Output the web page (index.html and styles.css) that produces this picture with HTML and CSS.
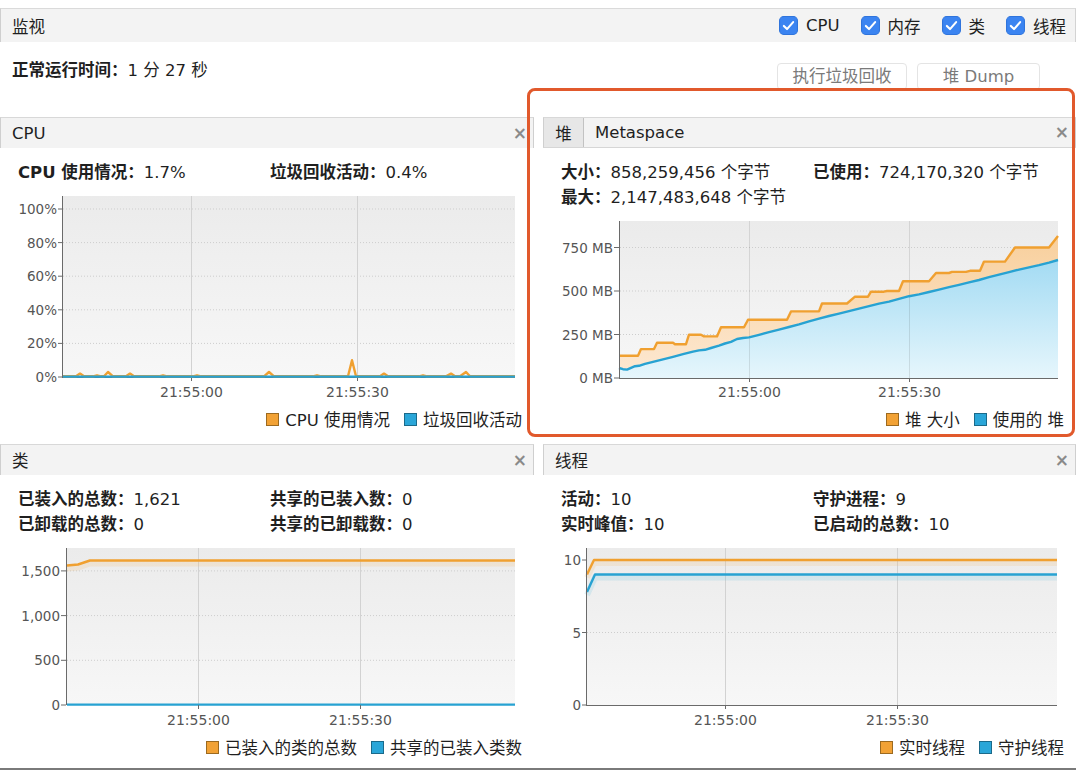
FILE: index.html
```html
<!DOCTYPE html>
<html lang="zh-CN">
<head>
<meta charset="utf-8">
<title>监视</title>
<link rel="stylesheet" href="styles.css">
</head>
<body>
<svg class="defs" width="0" height="0" aria-hidden="true">
  <defs>
    <linearGradient id="plotbg" x1="0" y1="0" x2="0" y2="1">
      <stop offset="0" stop-color="#ebebeb"/>
      <stop offset="1" stop-color="#f7f7f7"/>
    </linearGradient>
    <linearGradient id="heapOrange" x1="0" y1="0" x2="0" y2="1">
      <stop offset="0" stop-color="#f8cf9c"/>
      <stop offset="1" stop-color="#fde9d3"/>
    </linearGradient>
    <linearGradient id="heapBlue" x1="0" y1="0" x2="0" y2="1">
      <stop offset="0" stop-color="#a3dbf3"/>
      <stop offset="1" stop-color="#e6f6fc"/>
    </linearGradient>
  </defs>
</svg>
<div class="app">
  <div class="monitor-bar">
    <span class="bar-title">监视</span>
    <div class="toggles">
      <label class="toggle"><svg class="cb" viewBox="0 0 18 18"><rect x="0.5" y="0.5" width="17" height="17" rx="4" class="cb-box"/><path d="M4.6 9.4 L7.6 12.4 L13.4 5.8" class="cb-check"/></svg>CPU</label>
      <label class="toggle"><svg class="cb" viewBox="0 0 18 18"><rect x="0.5" y="0.5" width="17" height="17" rx="4" class="cb-box"/><path d="M4.6 9.4 L7.6 12.4 L13.4 5.8" class="cb-check"/></svg>内存</label>
      <label class="toggle"><svg class="cb" viewBox="0 0 18 18"><rect x="0.5" y="0.5" width="17" height="17" rx="4" class="cb-box"/><path d="M4.6 9.4 L7.6 12.4 L13.4 5.8" class="cb-check"/></svg>类</label>
      <label class="toggle"><svg class="cb" viewBox="0 0 18 18"><rect x="0.5" y="0.5" width="17" height="17" rx="4" class="cb-box"/><path d="M4.6 9.4 L7.6 12.4 L13.4 5.8" class="cb-check"/></svg>线程</label>
    </div>
  </div>

  <div class="info-row">
    <div class="uptime"><b>正常运行时间：</b>1 分 27 秒</div>
    <div class="actions">
      <button class="btn btn-gc">执行垃圾回收</button>
      <button class="btn btn-dump">堆 Dump</button>
    </div>
  </div>

  <div class="panels">
    <!-- CPU -->
    <section class="panel">
      <div class="panel-head"><span>CPU</span><span class="close">×</span></div>
      <div class="stats single">
        <div><b>CPU 使用情况：</b>1.7%</div>
        <div><b>垃圾回收活动：</b>0.4%</div>
      </div>
      <svg class="chart" width="534" height="206" viewBox="0 0 534 206">
        <rect x="62" y="0" width="453" height="181" fill="url(#plotbg)"/>
        <g class="hgrid">
          <line x1="63" y1="13" x2="515" y2="13"/>
          <line x1="63" y1="46.6" x2="515" y2="46.6"/>
          <line x1="63" y1="80.2" x2="515" y2="80.2"/>
          <line x1="63" y1="113.8" x2="515" y2="113.8"/>
          <line x1="63" y1="147.4" x2="515" y2="147.4"/>
        </g>
        <g class="vgrid">
          <line x1="191.5" y1="0" x2="191.5" y2="181"/>
          <line x1="357.5" y1="0" x2="357.5" y2="181"/>
        </g>
        <g class="axis">
          <line x1="62.5" y1="0" x2="62.5" y2="181"/>
          <line x1="62" y1="181.5" x2="515" y2="181.5"/>
          <line x1="58" y1="13" x2="62" y2="13"/>
          <line x1="58" y1="46.6" x2="62" y2="46.6"/>
          <line x1="58" y1="80.2" x2="62" y2="80.2"/>
          <line x1="58" y1="113.8" x2="62" y2="113.8"/>
          <line x1="58" y1="147.4" x2="62" y2="147.4"/>
          <line x1="58" y1="181" x2="62" y2="181"/>
          <line x1="191.5" y1="181" x2="191.5" y2="185"/>
          <line x1="357.5" y1="181" x2="357.5" y2="185"/>
        </g>
        <g class="ylab">
          <text x="57" y="18">100%</text>
          <text x="57" y="51.6">80%</text>
          <text x="57" y="85.2">60%</text>
          <text x="57" y="118.8">40%</text>
          <text x="57" y="152.4">20%</text>
          <text x="57" y="186">0%</text>
        </g>
        <g class="xlab">
          <text x="191.5" y="201">21:55:00</text>
          <text x="357.5" y="201">21:55:30</text>
        </g>
        <path class="ln-o" d="M63,180.3 L76,180.3 L80,177.6 L84,180.3 L93,180.3 L97,179.3 L101,180.3 L104,180.3 L108,176 L113,180.3 L126,180.3 L130,177.6 L134,180.3 L159,180.3 L163,179.3 L167,180.3 L193,180.3 L197,179.3 L201,180.3 L264,180.3 L269,176 L274,180.3 L313,180.3 L317,179.3 L321,180.3 L348,180.3 L352,164.2 L356,180.3 L380,180.3 L384,177.6 L388,180.3 L419,180.3 L423,179.3 L427,180.3 L446,180.3 L451,177.6 L455,180.3 L460,180.3 L466,176 L470,180.3 L515,180.3"/>
        <path class="ln-b" d="M63,180.6 L515,180.6"/>
      </svg>
      <div class="legend">
        <span class="legend-item"><span class="sw sw-o"></span>CPU 使用情况</span>
        <span class="legend-item"><span class="sw sw-b"></span>垃圾回收活动</span>
      </div>
    </section>

    <!-- Heap -->
    <section class="panel">
      <div class="panel-head tabs">
        <div class="tabbar">
          <span class="tab active">堆</span>
          <span class="tab">Metaspace</span>
        </div>
        <span class="close">×</span>
      </div>
      <div class="stats">
        <div><b>大小：</b>858,259,456 个字节</div>
        <div><b>已使用：</b>724,170,320 个字节</div>
        <div><b>最大：</b>2,147,483,648 个字节</div>
      </div>
      <svg class="chart" width="533" height="181" viewBox="0 0 533 181">
        <rect x="76" y="0" width="439" height="157" fill="url(#plotbg)"/>
        <g class="hgrid">
          <line x1="77" y1="26.5" x2="515" y2="26.5"/>
          <line x1="77" y1="70" x2="515" y2="70"/>
          <line x1="77" y1="113.5" x2="515" y2="113.5"/>
        </g>
        <g transform="translate(76,0)">
          <path fill="url(#heapOrange)" d="M0,134.7 L19,134.7 L22,128.1 L35,128.1 L38,121.7 L54,121.7 L56,123.2 L67,123.2 L70,113.7 L82,113.7 L85,115.4 L98,115.4 L102,106.2 L125,106.2 L129,98.7 L168,98.7 L172,90.4 L200,90.4 L203,82.5 L228,82.5 L236,75.7 L249,75.7 L252,70.7 L265,70.7 L268,70 L280,70 L284,60.3 L310,60.3 L317,52 L330,52 L333,50.9 L347,50.9 L351,49.8 L361,49.8 L365,40.6 L386,40.6 L396,26.5 L430,26.5 L439,15 L439,157 L0,157 Z"/>
          <path fill="url(#heapBlue)" d="M0,147 L4,148.2 L8,148.6 L12,146.8 L16,145.2 L20,144.8 L26,142.8 L34,140.8 L44,138.4 L54,135.8 L64,133.2 L74,130.6 L80,129.4 L86,128.8 L92,127 L100,124.6 L106,122.5 L112,120.8 L118,118 L124,117 L130,116.4 L140,113.8 L150,111.2 L160,108.6 L170,106 L180,103.4 L190,100.4 L200,97.6 L210,95 L220,92.6 L230,90.2 L240,87.6 L250,85.2 L260,82.6 L270,80.6 L280,77.8 L290,75.2 L300,73.4 L310,71 L320,68.6 L330,66.2 L340,63.8 L350,61.4 L360,59 L370,56.2 L380,53.6 L390,51.2 L400,48.6 L410,46.4 L420,44.2 L430,41.6 L439,39 L439,157 L0,157 Z"/>
        </g>
        <g class="vgrid soft">
          <line x1="206.5" y1="0" x2="206.5" y2="157"/>
          <line x1="366.5" y1="0" x2="366.5" y2="157"/>
        </g>
        <g transform="translate(76,0)">
          <path class="ln-o" d="M0,134.7 L19,134.7 L22,128.1 L35,128.1 L38,121.7 L54,121.7 L56,123.2 L67,123.2 L70,113.7 L82,113.7 L85,115.4 L98,115.4 L102,106.2 L125,106.2 L129,98.7 L168,98.7 L172,90.4 L200,90.4 L203,82.5 L228,82.5 L236,75.7 L249,75.7 L252,70.7 L265,70.7 L268,70 L280,70 L284,60.3 L310,60.3 L317,52 L330,52 L333,50.9 L347,50.9 L351,49.8 L361,49.8 L365,40.6 L386,40.6 L396,26.5 L430,26.5 L439,15"/>
          <path class="ln-b" d="M0,147 L4,148.2 L8,148.6 L12,146.8 L16,145.2 L20,144.8 L26,142.8 L34,140.8 L44,138.4 L54,135.8 L64,133.2 L74,130.6 L80,129.4 L86,128.8 L92,127 L100,124.6 L106,122.5 L112,120.8 L118,118 L124,117 L130,116.4 L140,113.8 L150,111.2 L160,108.6 L170,106 L180,103.4 L190,100.4 L200,97.6 L210,95 L220,92.6 L230,90.2 L240,87.6 L250,85.2 L260,82.6 L270,80.6 L280,77.8 L290,75.2 L300,73.4 L310,71 L320,68.6 L330,66.2 L340,63.8 L350,61.4 L360,59 L370,56.2 L380,53.6 L390,51.2 L400,48.6 L410,46.4 L420,44.2 L430,41.6 L439,39"/>
        </g>
        <g class="axis">
          <line x1="76.5" y1="0" x2="76.5" y2="157"/>
          <line x1="76" y1="157.5" x2="515" y2="157.5"/>
          <line x1="71" y1="26.5" x2="76" y2="26.5"/>
          <line x1="71" y1="70" x2="76" y2="70"/>
          <line x1="71" y1="113.5" x2="76" y2="113.5"/>
          <line x1="71" y1="157" x2="76" y2="157"/>
          <line x1="206.5" y1="157" x2="206.5" y2="161"/>
          <line x1="366.5" y1="157" x2="366.5" y2="161"/>
        </g>
        <g class="ylab">
          <text x="70" y="31.5">750 MB</text>
          <text x="70" y="75">500 MB</text>
          <text x="70" y="118.5">250 MB</text>
          <text x="70" y="162">0 MB</text>
        </g>
        <g class="xlab">
          <text x="206.5" y="176">21:55:00</text>
          <text x="366.5" y="176">21:55:30</text>
        </g>
      </svg>
      <div class="legend">
        <span class="legend-item"><span class="sw sw-o"></span>堆 大小</span>
        <span class="legend-item"><span class="sw sw-b"></span>使用的 堆</span>
      </div>
    </section>

    <!-- Classes -->
    <section class="panel">
      <div class="panel-head"><span>类</span><span class="close">×</span></div>
      <div class="stats">
        <div><b>已装入的总数：</b>1,621</div>
        <div><b>共享的已装入数：</b>0</div>
        <div><b>已卸载的总数：</b>0</div>
        <div><b>共享的已卸载数：</b>0</div>
      </div>
      <svg class="chart" width="534" height="182" viewBox="0 0 534 182">
        <rect x="66" y="0" width="449" height="157" fill="url(#plotbg)"/>
        <g class="hgrid">
          <line x1="67" y1="22.9" x2="515" y2="22.9"/>
          <line x1="67" y1="67.6" x2="515" y2="67.6"/>
          <line x1="67" y1="112.3" x2="515" y2="112.3"/>
        </g>
        <g class="vgrid">
          <line x1="198.5" y1="0" x2="198.5" y2="157"/>
          <line x1="360.5" y1="0" x2="360.5" y2="157"/>
        </g>
        <path class="glow-o" d="M66,20.5 L78,19.5 L90,15.5 L515,15.5"/>
        <path class="ln-o" d="M67,17.5 L78,16.5 L90,12.5 L515,12.5"/>
        <path class="ln-b" d="M67,156.6 L515,156.6"/>
        <g class="axis">
          <line x1="66.5" y1="0" x2="66.5" y2="157"/>
          <line x1="61" y1="22.9" x2="66" y2="22.9"/>
          <line x1="61" y1="67.6" x2="66" y2="67.6"/>
          <line x1="61" y1="112.3" x2="66" y2="112.3"/>
          <line x1="61" y1="157" x2="66" y2="157"/>
          <line x1="198.5" y1="157" x2="198.5" y2="161"/>
          <line x1="360.5" y1="157" x2="360.5" y2="161"/>
        </g>
        <g class="ylab">
          <text x="60" y="27.9">1,500</text>
          <text x="60" y="72.6">1,000</text>
          <text x="60" y="117.3">500</text>
          <text x="60" y="162">0</text>
        </g>
        <g class="xlab">
          <text x="198.5" y="177">21:55:00</text>
          <text x="360.5" y="177">21:55:30</text>
        </g>
      </svg>
      <div class="legend">
        <span class="legend-item"><span class="sw sw-o"></span>已装入的类的总数</span>
        <span class="legend-item"><span class="sw sw-b"></span>共享的已装入类数</span>
      </div>
    </section>

    <!-- Threads -->
    <section class="panel">
      <div class="panel-head"><span>线程</span><span class="close">×</span></div>
      <div class="stats">
        <div><b>活动：</b>10</div>
        <div><b>守护进程：</b>9</div>
        <div><b>实时峰值：</b>10</div>
        <div><b>已启动的总数：</b>10</div>
      </div>
      <svg class="chart" width="533" height="182" viewBox="0 0 533 182">
        <rect x="43" y="0" width="471" height="157" fill="url(#plotbg)"/>
        <g class="hgrid">
          <line x1="44" y1="84.5" x2="514" y2="84.5"/>
        </g>
        <g class="vgrid">
          <line x1="182.5" y1="0" x2="182.5" y2="157"/>
          <line x1="354.5" y1="0" x2="354.5" y2="157"/>
        </g>
        <path class="glow-o" d="M44,29.5 L51,15 L514,15"/>
        <path class="glow-b" d="M44,46.9 L52,29.5 L514,29.5"/>
        <path class="ln-o" d="M44,26.5 L51,12 L514,12"/>
        <path class="ln-b" d="M44,43.9 L52,26.5 L514,26.5"/>
        <g class="axis">
          <line x1="43.5" y1="0" x2="43.5" y2="157"/>
          <line x1="43" y1="157.5" x2="514" y2="157.5"/>
          <line x1="39" y1="12" x2="43" y2="12"/>
          <line x1="39" y1="84.5" x2="43" y2="84.5"/>
          <line x1="39" y1="157" x2="43" y2="157"/>
          <line x1="182.5" y1="157" x2="182.5" y2="161"/>
          <line x1="354.5" y1="157" x2="354.5" y2="161"/>
        </g>
        <g class="ylab">
          <text x="38" y="17">10</text>
          <text x="38" y="89.5">5</text>
          <text x="38" y="162">0</text>
        </g>
        <g class="xlab">
          <text x="182.5" y="177">21:55:00</text>
          <text x="354.5" y="177">21:55:30</text>
        </g>
      </svg>
      <div class="legend">
        <span class="legend-item"><span class="sw sw-o"></span>实时线程</span>
        <span class="legend-item"><span class="sw sw-b"></span>守护线程</span>
      </div>
    </section>
  </div>

  <div class="highlight"></div>
</div>
</body>
</html>
```

FILE: styles.css
```css
html, body {
  margin: 0;
  padding: 0;
}

body {
  width: 1080px;
  height: 770px;
  overflow: hidden;
  background: #ffffff;
  font-family: "DejaVu Sans", "Noto Sans CJK SC", sans-serif;
  font-size: 16.5px;
  color: #1f1f1f;
}

.defs {
  display: block;
  width: 0;
  height: 0;
  overflow: hidden;
}

.app {
  position: relative;
  width: 1080px;
  height: 770px;
  padding-top: 8px;
  box-sizing: border-box;
}

/* top monitor bar */
.monitor-bar {
  width: 1076px;
  height: 34px;
  box-sizing: border-box;
  background: #f3f3f3;
  border-top: 1px solid #dadada;
  border-left: 1px solid #cfcfcf;
  border-right: 1px solid #d3d3d3;
  display: flex;
  align-items: center;
  justify-content: space-between;
  padding: 0 9px 0 11px;
}

.toggles {
  display: flex;
  align-items: center;
  gap: 21px;
}

.toggle {
  display: flex;
  align-items: center;
  gap: 8px;
}

.cb {
  width: 19px;
  height: 19px;
  display: block;
}

.cb-box {
  fill: #3b84f1;
  stroke: #2f74dc;
  stroke-width: 1;
}

.cb-check {
  fill: none;
  stroke: #ffffff;
  stroke-width: 2;
  stroke-linecap: round;
  stroke-linejoin: round;
}

/* uptime + actions */
.info-row {
  width: 1076px;
  height: 75px;
  display: flex;
  justify-content: space-between;
  align-items: flex-start;
}

.uptime {
  margin: 17px 0 0 12px;
  line-height: 24px;
}

.uptime b {
  font-weight: 700;
}

.actions {
  display: flex;
  gap: 10px;
  margin: 21px 36px 0 0;
}

.btn {
  height: 27px;
  box-sizing: border-box;
  border: 1px solid #e4e4e4;
  border-radius: 4px;
  background: #ffffff;
  color: #7a7a7a;
  font: inherit;
  padding: 0;
  line-height: 25px;
  text-align: center;
}

.btn-gc {
  width: 130px;
}

.btn-dump {
  width: 123px;
}

/* panels */
.panels {
  width: 1076px;
  display: grid;
  grid-template-columns: 534px 533px;
  grid-template-rows: 327px 324px;
  column-gap: 9px;
  border-bottom: 2px solid #7a7a7a;
}

.panel {
  display: flex;
  flex-direction: column;
  min-width: 0;
}

.panel-head {
  height: 31px;
  box-sizing: border-box;
  background: #f3f3f3;
  border-top: 1px solid #d8d8d8;
  border-left: 1px solid #cfcfcf;
  border-right: 1px solid #cfcfcf;
  display: flex;
  align-items: center;
  justify-content: space-between;
  padding: 0 6px 0 11px;
}

.panel-head.tabs {
  padding-left: 0;
  border-bottom: 1px solid #d6d6d6;
}

.tabbar {
  display: flex;
  align-items: stretch;
  height: 100%;
}

.tab {
  display: flex;
  align-items: center;
  padding-left: 11px;
}

.tab.active {
  width: 39px;
  padding-left: 0;
  justify-content: center;
  background: #e7e7e7;
  border-right: 1px solid #c2c2c2;
}

.close {
  color: #8a8a8a;
  font-size: 17px;
  font-weight: 700;
  line-height: 1;
}

.stats {
  display: grid;
  grid-template-columns: 252px auto;
  padding: 12px 0 0 18px;
  line-height: 25px;
}

.stats b {
  font-weight: 700;
}

.chart {
  display: block;
  margin-top: 11px;
}

.hgrid line {
  stroke: #cdcdcd;
  stroke-width: 1;
  stroke-dasharray: 1 2;
}

.vgrid line {
  stroke: #d2d2d2;
  stroke-width: 1;
}

.vgrid.soft line {
  stroke: rgba(0, 0, 0, 0.1);
}

.axis line {
  stroke: #6a6a6a;
  stroke-width: 1;
}

.ylab text {
  font-family: "DejaVu Sans", sans-serif;
  font-size: 13.5px;
  fill: #555555;
  text-anchor: end;
}

.xlab text {
  font-family: "DejaVu Sans", sans-serif;
  font-size: 14px;
  fill: #555555;
  text-anchor: middle;
}

.ln-o {
  fill: none;
  stroke: #f0a030;
  stroke-width: 2.4;
  stroke-linejoin: round;
}

.ln-b {
  fill: none;
  stroke: #27a2d2;
  stroke-width: 2.4;
  stroke-linejoin: round;
}

.glow-o {
  fill: none;
  stroke: #f5b866;
  stroke-width: 6;
  opacity: 0.18;
}

.glow-b {
  fill: none;
  stroke: #5cc0e6;
  stroke-width: 6;
  opacity: 0.18;
}

.legend {
  display: flex;
  justify-content: flex-end;
  align-items: center;
  gap: 14px;
  height: 22px;
  margin-top: 6px;
  padding-right: 12px;
}

.legend-item {
  display: flex;
  align-items: center;
  gap: 6px;
}

.sw {
  width: 13px;
  height: 13px;
  box-sizing: border-box;
  border: 1px solid;
}

.sw-o {
  background: #f2a235;
  border-color: #9c6a20;
}

.sw-b {
  background: #2aa6d8;
  border-color: #1b6a8a;
}

/* annotation overlay */
.highlight {
  position: absolute;
  left: 527px;
  top: 88px;
  width: 548px;
  height: 349px;
  box-sizing: border-box;
  border: 3px solid #e1592c;
  border-radius: 8px;
  pointer-events: none;
}
```
